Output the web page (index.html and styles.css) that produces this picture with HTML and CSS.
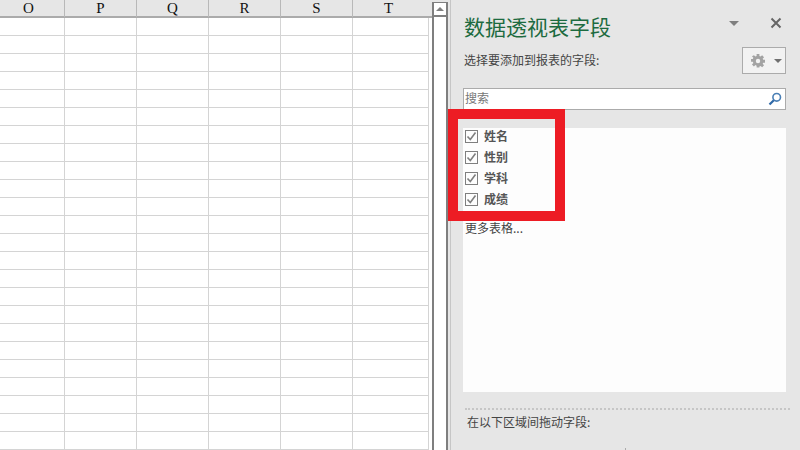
FILE: index.html
```html
<!DOCTYPE html>
<html lang="zh">
<head>
<meta charset="utf-8">
<title>数据透视表字段</title>
<link rel="stylesheet" href="styles.css">
</head>
<body>
<div class="app">
  <section class="sheet">
    <div class="sheet-head">
      <div class="head-cell">O</div>
      <div class="head-cell">P</div>
      <div class="head-cell">Q</div>
      <div class="head-cell">R</div>
      <div class="head-cell">S</div>
      <div class="head-cell">T</div>
    </div>
    <div class="sheet-body">
      <div class="col"></div>
      <div class="col"></div>
      <div class="col"></div>
      <div class="col"></div>
      <div class="col"></div>
      <div class="col"></div>
    </div>
  </section>
  <div class="scrollbar">
    <div class="scroll-up"><span class="scroll-arrow"></span></div>
  </div>
  <aside class="pane">
    <header class="pane-head">
      <h1 class="pane-title">数据透视表字段</h1>
      <span class="pane-menu"></span>
      <svg class="pane-close" width="12" height="12" viewBox="0 0 12 12"><path d="M1.500 1.500l9 9M10.500 1.500l-9 9" stroke="#666" stroke-width="2" fill="none"/></svg>
    </header>
    <div class="pick-row">
      <span class="pick-label">选择要添加到报表的字段:</span>
      <div class="gear-btn">
        <svg width="14" height="14" viewBox="0 0 14 14"><path d="M5.500 0h3v2.200l1.300.6L11.400 1.300l2.100 2.100-1.500 1.600.6 1.300H14.500v3H12.600l-.6 1.300 1.500 1.600-2.100 2.100-1.600-1.500-1.300.6V14.500h-3v-2l-1.300-.6-1.600 1.500L.5 11.300l1.500-1.600-.6-1.300H-.5v-3h1.900l.6-1.300-1.500-1.600L2.600 1.300l1.600 1.500 1.300-.6z" fill="#a3a3a3" transform="translate(.5 0) scale(.93)"/><circle cx="7" cy="7" r="2.200" fill="#f2f2f2"/></svg>
        <span class="gear-caret"></span>
      </div>
    </div>
    <div class="search">
      <span class="search-text">搜索</span>
      <svg class="search-icon" width="14" height="14" viewBox="0 0 14 14"><circle cx="8.700" cy="5.300" r="3.800" fill="none" stroke="#4a7fb5" stroke-width="1.600"/><path d="M5.800 8.200L1.500 12.500" stroke="#2f69a8" stroke-width="2.200" fill="none"/></svg>
    </div>
    <div class="fields">
      <label class="field"><span class="check"><svg width="11" height="11" viewBox="0 0 11 11"><path d="M1.500 5.500l2.800 3L9.500 1.500" stroke="#7f7f7f" stroke-width="1.600" fill="none"/></svg></span>姓名</label>
      <label class="field"><span class="check"><svg width="11" height="11" viewBox="0 0 11 11"><path d="M1.500 5.500l2.800 3L9.500 1.500" stroke="#7f7f7f" stroke-width="1.600" fill="none"/></svg></span>性别</label>
      <label class="field"><span class="check"><svg width="11" height="11" viewBox="0 0 11 11"><path d="M1.500 5.500l2.800 3L9.500 1.500" stroke="#7f7f7f" stroke-width="1.600" fill="none"/></svg></span>学科</label>
      <label class="field"><span class="check"><svg width="11" height="11" viewBox="0 0 11 11"><path d="M1.500 5.500l2.800 3L9.500 1.500" stroke="#7f7f7f" stroke-width="1.600" fill="none"/></svg></span>成绩</label>
      <div class="more">更多表格...</div>
    </div>
    <div class="drag-hint">在以下区域间拖动字段:</div>
    <div class="area-tick"></div>
  </aside>
  <div class="highlight"></div>
</div>
</body>
</html>
```
FILE: styles.css
```css
* { box-sizing: border-box; }
html, body { margin: 0; padding: 0; }
body {
  width: 800px;
  height: 450px;
  overflow: hidden;
  background: #e6e6e6;
  font-family: "Noto Sans CJK SC", "Liberation Sans", sans-serif;
}
.app {
  position: relative;
  display: flex;
  width: 800px;
  height: 450px;
  overflow: hidden;
}
.sheet {
  width: 432px;
  flex: none;
  display: flex;
  flex-direction: column;
  background: #fff;
}
.sheet-head, .sheet-body {
  display: grid;
  grid-template-columns: 65px 72px 72px 72px 72px 76px;
  width: 429px;
}
.sheet-head {
  height: 18px;
  background: #e6e6e6;
  border-bottom: 2px solid #ababab;
  width: 432px;
  grid-template-columns: 65px 72px 72px 72px 72px 79px;
}
.head-cell {
  border-right: 1px solid #b8b8b8;
  font: 15px/17px "Liberation Serif", serif;
  text-align: center;
  color: #111;
  padding-right: 7px;
}
.head-cell:nth-child(n+2) { padding-right: 0; }
.head-cell:last-child { border-right: 0; padding-right: 8px; }
.sheet-body {
  flex: 1;
  background-image: linear-gradient(#d4d4d4 1px, transparent 1px);
  background-size: 100% 18px;
  background-position: 0 17px;
}
.col { border-right: 1px solid #d4d4d4; }
.scrollbar {
  width: 16px;
  flex: none;
  margin-top: 2px;
  background: #fff;
  border: solid #7f7f7f;
  border-width: 1px 2px 0;
}
.scroll-up {
  height: 14px;
  border-bottom: 2px solid #7f7f7f;
  display: flex;
  align-items: center;
  justify-content: center;
}
.scroll-arrow {
  width: 0;
  height: 0;
  border: solid transparent;
  border-width: 0 4px 4px;
  border-bottom-color: #7f7f7f;
}
.pane {
  position: relative;
  flex: 1;
  margin-left: 2px;
  padding-left: 12px;
  border-left: 1px solid #c6c6c6;
  display: flex;
  flex-direction: column;
  background: #e6e6e6;
  color: #444;
}
.pane-head {
  height: 47px;
  display: flex;
  align-items: flex-start;
  padding-top: 11px;
}
.pane-title {
  margin: 0 0 0 1px;
  font-size: 21px;
  line-height: 30px;
  font-weight: 400;
  color: #1d6b40;
}
.pane-menu {
  width: 0;
  height: 0;
  margin: 10px 0 0 118px;
  border: solid transparent;
  border-width: 5px 5px 0;
  border-top-color: #7f7f7f;
}
.pane-close { margin: 6px 0 0 31px; }
.pick-row {
  height: 41px;
  display: flex;
  align-items: flex-start;
  justify-content: space-between;
  padding-left: 1px;
  width: 323px;
}
.pick-label {
  font-size: 12px;
  line-height: 26px;
}
.gear-btn {
  width: 44px;
  height: 27px;
  background: #f2f2f2;
  border: 1px solid #ababab;
  display: flex;
  align-items: center;
  padding-left: 8px;
  gap: 9px;
}
.gear-caret {
  width: 0;
  height: 0;
  border: solid transparent;
  border-width: 4px 4px 0;
  border-top-color: #707070;
}
.search {
  width: 323px;
  height: 22px;
  background: #fff;
  border: 1px solid #ababab;
  display: flex;
  align-items: center;
  justify-content: space-between;
  padding: 0 3px 2px 1px;
}
.search-text { font-size: 12px; line-height: 18px; color: #777; }
.search-icon { margin-top: 2px; }
.fields {
  width: 323px;
  height: 264px;
  margin-top: 18px;
  background: #fdfdfd;
  padding: 0 0 0 2px;
  display: flex;
  flex-direction: column;
  gap: 7.300px;
}
.field {
  height: 14px;
  display: flex;
  align-items: center;
  gap: 6px;
  font-size: 12px;
  font-weight: 700;
  color: #555;
}
.check {
  width: 13px;
  height: 13px;
  margin-top: 2px;
  border: 1px solid #7f7f7f;
  display: flex;
  align-items: center;
  justify-content: center;
}
.more {
  margin-top: 5.700px;
  font-size: 12px;
  line-height: 18px;
  color: #444;
}
.drag-hint {
  margin: 16px 10px 0 2px;
  padding: 3px 0 0 2px;
  border-top: 2px dotted #c6c6c6;
  font-size: 12px;
  line-height: 18px;
}
.area-tick {
  position: absolute;
  left: 174px;
  bottom: 0;
  width: 1px;
  height: 2px;
  background: #ababab;
}
.highlight {
  position: absolute;
  left: 448px;
  top: 109px;
  width: 117px;
  height: 112px;
  border: 10px solid #ed1c24;
}
```
